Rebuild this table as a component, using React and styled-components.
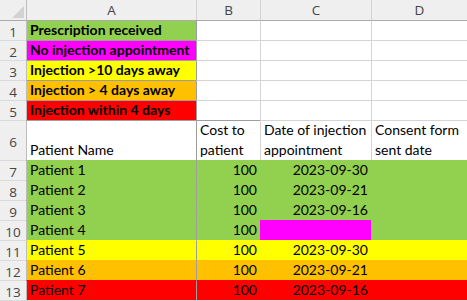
import React from "react";
import styled, { createGlobalStyle } from "styled-components";

const GREEN = "#92d050";
const MAGENTA = "#ff00ff";
const YELLOW = "#ffff00";
const ORANGE = "#ffc000";
const RED = "#ff0000";

const GRID = "#d4d4d4";
const HEAD_LINE = "#ababab";
const COL_A_LINE = "#9e9e9e";
const ROW_HEAD_LINE = "#bdbdbd";

const legend = [
  { text: "Prescription received", fill: GREEN },
  { text: "No injection appointment", fill: MAGENTA },
  { text: "Injection >10 days away", fill: YELLOW },
  { text: "Injection > 4 days away", fill: ORANGE },
  { text: "Injection within 4 days", fill: RED },
];

const patients = [
  { name: "Patient 1", cost: 100, date: "2023-09-30", fill: GREEN },
  { name: "Patient 2", cost: 100, date: "2023-09-21", fill: GREEN },
  { name: "Patient 3", cost: 100, date: "2023-09-16", fill: GREEN },
  { name: "Patient 4", cost: 100, date: "", fill: GREEN, dateFill: MAGENTA },
  { name: "Patient 5", cost: 100, date: "2023-09-30", fill: YELLOW },
  { name: "Patient 6", cost: 100, date: "2023-09-21", fill: ORANGE },
  { name: "Patient 7", cost: 100, date: "2023-09-16", fill: RED },
];

const GlobalStyle = createGlobalStyle`
  html, body {
    margin: 0;
    padding: 0;
    background: #ffffff;
    overflow: hidden;
  }
`;

const Sheet = styled.div`
  display: grid;
  grid-template-columns: 26px 170px 64px 111px 1fr;
  grid-template-rows: 20px repeat(5, 20px) 40px repeat(8, 20px);
  width: 467px;
  height: 301px;
  overflow: hidden;
  font-family: Lato, "Liberation Sans", sans-serif;
  font-size: 14px;
  color: #000;
`;

const Corner = styled.div`
  position: relative;
  background: #efefef;

  svg {
    position: absolute;
    right: 2px;
    bottom: 2px;
  }
`;

const ColHead = styled.div`
  display: flex;
  align-items: center;
  justify-content: center;
  background: #efefef;
  border-left: 1px solid ${(p) => p.$line || GRID};
  font-family: "Open Sans", "Noto Sans", sans-serif;
  font-size: 13.5px;
  color: #444;
`;

const RowHead = styled.div`
  display: flex;
  align-items: center;
  justify-content: center;
  background: #efefef;
  border-top: 1px solid ${(p) => p.$top || "#dadada"};
  font-family: "Open Sans", "Noto Sans", sans-serif;
  font-size: 13.5px;
  color: #444;
  padding-top: 2px;
`;

const Cell = styled.div`
  display: flex;
  flex-direction: column;
  justify-content: flex-end;
  align-items: ${(p) => (p.$right ? "flex-end" : "flex-start")};
  padding: 0 3px 0 3px;
  line-height: 20px;
  white-space: nowrap;
  background: ${(p) => p.$fill || "#fff"};
  border-top: 1px solid ${(p) => p.$top || p.$fill || GRID};
  border-left: 1px solid ${(p) => p.$left || p.$fill || GRID};
  font-weight: ${(p) => (p.$bold ? 700 : 400)};
`;

const Line = styled.span`
  display: block;
  height: 20px;
`;

const columns = ["A", "B", "C", "D"];

function App() {
  return (
    <>
      <GlobalStyle />
      <Sheet>
        <Corner>
          <svg width="12" height="12" viewBox="0 0 12 12">
            <polygon points="12,0 12,12 0,12" fill="#d2d2d2" />
          </svg>
        </Corner>
        {columns.map((c, i) => (
          <ColHead key={c} $line={i === 0 ? ROW_HEAD_LINE : GRID}>
            {c}
          </ColHead>
        ))}

        {legend.map((row, i) => (
          <React.Fragment key={row.text}>
            <RowHead $top={i === 0 ? HEAD_LINE : undefined}>{i + 1}</RowHead>
            <Cell
              $fill={row.fill}
              $bold
              $left={ROW_HEAD_LINE}
              $top={i === 0 ? HEAD_LINE : COL_A_LINE}
            >
              {row.text}
            </Cell>
            <Cell $left={COL_A_LINE} $top={i === 0 ? HEAD_LINE : GRID} />
            <Cell $top={i === 0 ? HEAD_LINE : GRID} />
            <Cell $top={i === 0 ? HEAD_LINE : GRID} />
          </React.Fragment>
        ))}

        <RowHead>6</RowHead>
        <Cell $left={ROW_HEAD_LINE} $top={COL_A_LINE}>
          Patient Name
        </Cell>
        <Cell $left={COL_A_LINE} $top={COL_A_LINE}>
          <Line>Cost to</Line>
          <Line>patient</Line>
        </Cell>
        <Cell $top={GRID}>
          <Line>Date of injection</Line>
          <Line>appointment</Line>
        </Cell>
        <Cell $top={GRID}>
          <Line>Consent form</Line>
          <Line>sent date</Line>
        </Cell>

        {patients.map((p, i) => (
          <React.Fragment key={p.name}>
            <RowHead>{i + 7}</RowHead>
            <Cell $fill={p.fill} $left={ROW_HEAD_LINE}>
              {p.name}
            </Cell>
            <Cell $fill={p.fill} $left={COL_A_LINE} $right>
              {p.cost}
            </Cell>
            <Cell $fill={p.dateFill || p.fill} $right>
              {p.date}
            </Cell>
            <Cell $fill={p.fill} />
          </React.Fragment>
        ))}

        <RowHead />
        <Cell $left={ROW_HEAD_LINE} />
        <Cell $left={COL_A_LINE} />
        <Cell />
        <Cell />
      </Sheet>
    </>
  );
}

export default App;
